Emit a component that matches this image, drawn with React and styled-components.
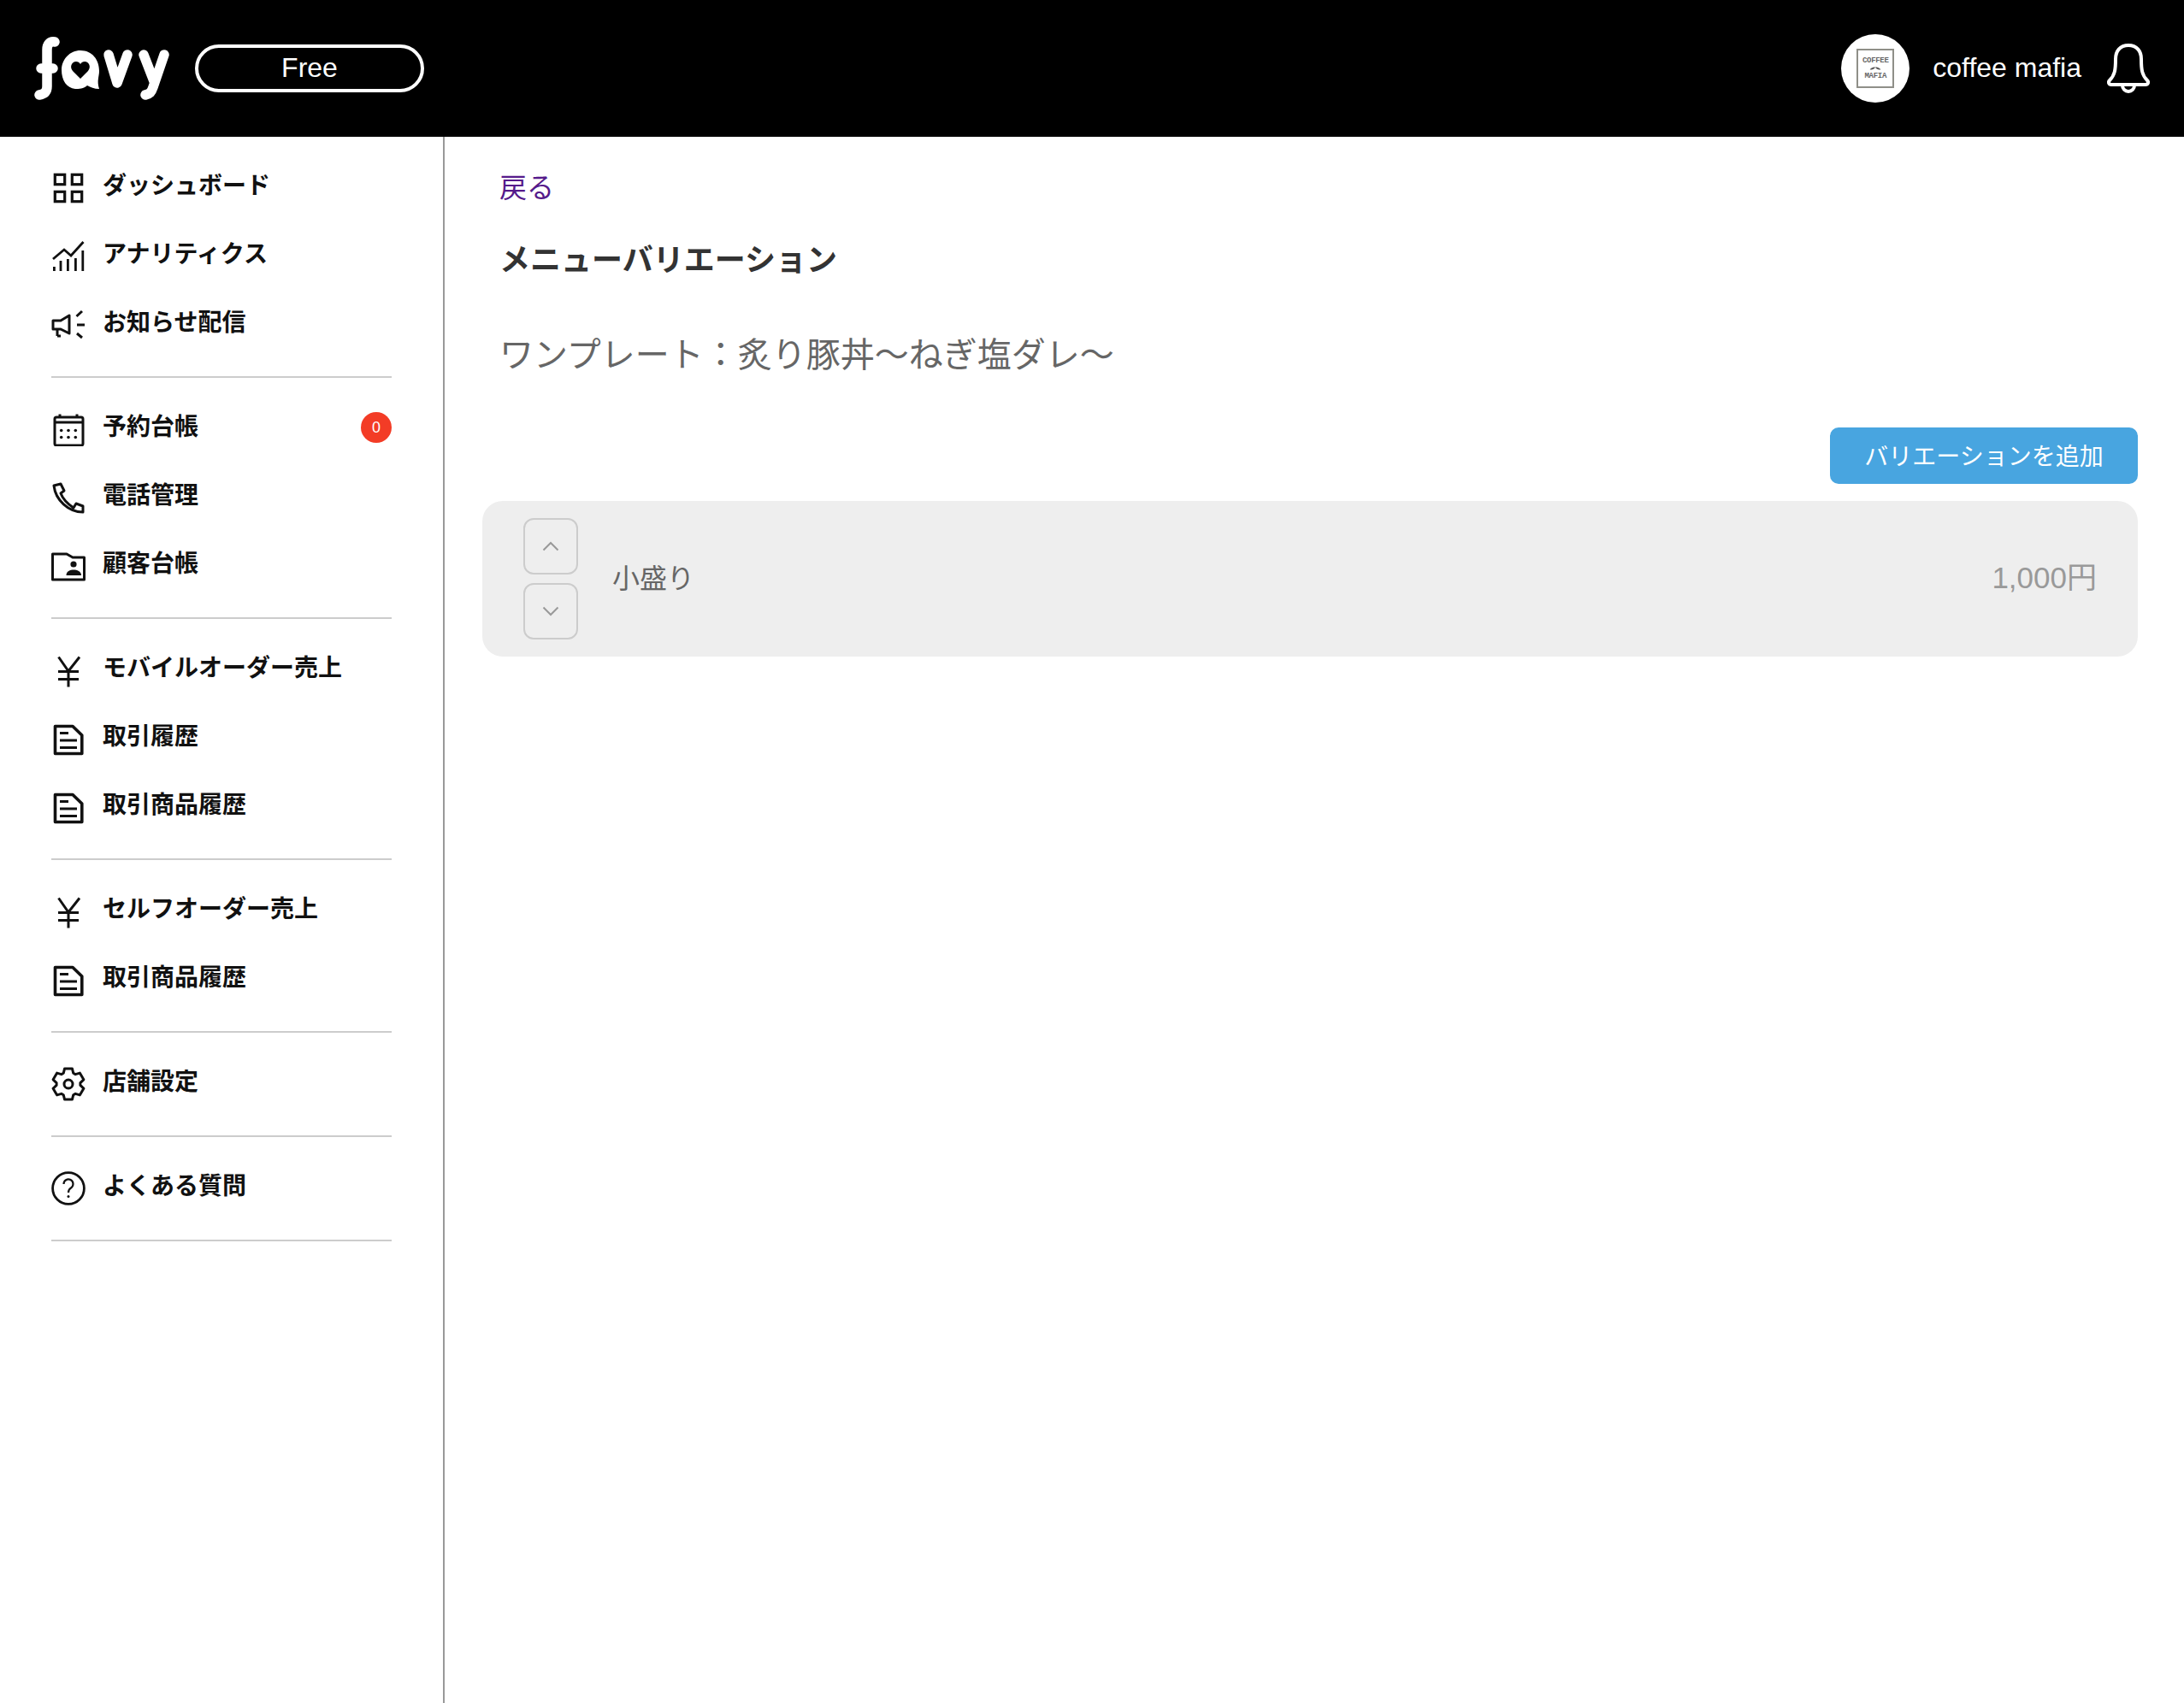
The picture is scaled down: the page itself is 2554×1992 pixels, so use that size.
import styled, { createGlobalStyle } from "styled-components";

const GlobalStyle = createGlobalStyle`
  html, body {
    margin: 0;
    padding: 0;
    background: #fff;
    font-family: "Liberation Sans", "Noto Sans CJK JP", sans-serif;
  }
  * { box-sizing: border-box; }
`;

const Page = styled.div`
  width: 2554px;
  height: 1992px;
  display: flex;
  flex-direction: column;
  overflow: hidden;
`;

const Header = styled.header`
  height: 160px;
  flex: none;
  background: #000;
  display: flex;
  align-items: center;
  justify-content: space-between;
  padding: 0 40px;
  color: #fff;
`;

const HeaderGroup = styled.div`
  display: flex;
  align-items: center;
`;

const PlanPill = styled.div`
  width: 268px;
  height: 56px;
  margin-left: 30px;
  padding-bottom: 2px;
  border: 4px solid #fff;
  border-radius: 28px;
  display: flex;
  align-items: center;
  justify-content: center;
  font-size: 32px;
`;

const Avatar = styled.div`
  width: 80px;
  height: 80px;
  border-radius: 50%;
  background: #fff;
  display: flex;
  align-items: center;
  justify-content: center;
`;

const AvatarMark = styled.div`
  width: 44px;
  height: 46px;
  border: 2px solid #8f8f88;
  display: flex;
  flex-direction: column;
  align-items: center;
  justify-content: center;
  gap: 2px;
  font-family: "Liberation Mono", monospace;
  font-weight: 700;
  font-size: 9px;
  letter-spacing: -0.3px;
  line-height: 10px;
  color: #666;
`;

const ShopName = styled.div`
  margin-left: 27px;
  padding-bottom: 2px;
  font-size: 32px;
`;

const BellWrap = styled.div`
  margin-left: 30px;
  display: flex;
`;

const Body = styled.div`
  flex: 1;
  display: flex;
  min-height: 0;
`;

const Sidebar = styled.nav`
  width: 520px;
  flex: none;
  border-right: 2px solid #999;
  padding: 20px 60px 0;
`;

const Group = styled.div`
  padding-bottom: 20px;
  margin-bottom: 20px;
  border-bottom: 2px solid #ccc;
`;

const Row = styled.div`
  height: 80px;
  display: flex;
  align-items: center;
  color: #111;
`;

const IconBox = styled.div`
  width: 40px;
  height: 40px;
  flex: none;
  display: flex;
`;

const RowLabel = styled.span`
  flex: 1;
  margin-left: 20px;
  padding-bottom: 4px;
  font-size: 28px;
  line-height: 40px;
  font-weight: 700;
`;

const Badge = styled.span`
  width: 36px;
  height: 36px;
  margin-bottom: 4px;
  border-radius: 50%;
  background: #f33c26;
  color: #fff;
  font-size: 18px;
  display: flex;
  align-items: center;
  justify-content: center;
`;

const Main = styled.main`
  flex: 1;
  min-width: 0;
  padding: 0 54px 0 44px;
`;

const Intro = styled.div`
  padding-left: 20px;
`;

const BackLink = styled.a`
  display: block;
  margin-top: 37px;
  font-size: 32px;
  line-height: 46px;
  color: #551a8b;
`;

const Title = styled.h1`
  margin: 36px 0 0;
  font-size: 36px;
  line-height: 52px;
  font-weight: 700;
  color: #333;
`;

const Subtitle = styled.h2`
  margin: 55px 0 0;
  font-size: 40px;
  line-height: 58px;
  font-weight: 400;
  color: #666;
`;

const Actions = styled.div`
  margin-top: 56px;
  display: flex;
  justify-content: flex-end;
`;

const AddButton = styled.button`
  width: 360px;
  height: 66px;
  border: 0;
  border-radius: 10px;
  background: #48a5e0;
  color: #fff;
  font-family: inherit;
  font-size: 28px;
  padding: 0 0 2px;
`;

const VariationCard = styled.div`
  margin-top: 20px;
  height: 182px;
  border-radius: 24px;
  background: #eee;
  padding: 0 48px;
  display: flex;
  align-items: center;
`;

const Sorters = styled.div`
  display: flex;
  flex-direction: column;
  gap: 10px;
`;

const SortButton = styled.div`
  width: 64px;
  height: 66px;
  border: 2px solid #ccc;
  border-radius: 12px;
  display: flex;
  align-items: center;
  justify-content: center;
`;

const VariationName = styled.div`
  flex: 1;
  margin-left: 40px;
  padding-bottom: 6px;
  font-size: 32px;
  color: #666;
`;

const VariationPrice = styled.div`
  padding-bottom: 10px;
  font-size: 35px;
  color: #999;
`;

const Svg = ({ children, w = 40, h = 40, ...rest }) => (
  <svg
    width={w}
    height={h}
    viewBox={`0 0 ${w} ${h}`}
    fill="none"
    stroke="currentColor"
    strokeWidth="3"
    {...rest}
  >
    {children}
  </svg>
);

const FavyLogo = () => (
  <svg width="158" height="74" viewBox="40 49 158 74" fill="none" stroke="#fff" strokeWidth="11.5" strokeLinecap="round" strokeLinejoin="round">
    <path d="M64 55 C58 54 55 58 55 64 V107 C55 113 52 116 46 117" />
    <path d="M48 86 H62" />
    <path
      fill="#fff"
      stroke="none"
      fillRule="evenodd"
      d="M94 65 C108 65 116 76 116 89 C116 96 113 100 116 110 C110 110 106 108 102 106 C98 110 92 110 88 110 C78 109 72 100 72 88 C72 75 82 65 94 65 Z M94 98 L85 89 C81 84 84 78 89 78 C91 78 93 79 94 81 C95 79 97 78 99 78 C104 78 107 84 103 89 Z"
    />
    <path d="M127 70 L137 103 L149 70" />
    <path d="M168 70 L180 101 M192 70 L179 108 C177 114 175 116 170 117" />
  </svg>
);

const Moustache = () => (
  <svg width="16" height="4" viewBox="0 0 16 5">
    <path d="M0 4 C3 5 6 4 8 1 C10 4 13 5 16 4 C13 1 10 0 8 1 C6 0 3 1 0 4 Z" fill="#555" />
  </svg>
);

const BellIcon = () => (
  <Svg w={50} h={60} strokeWidth="4" strokeLinejoin="round">
    <path d="M25 3 C15 3 10 10 10 19 C10 32 9 38 3 44 C1 46 2 49 5 49 H45 C48 49 49 46 47 44 C41 38 40 32 40 19 C40 10 35 3 25 3 Z" />
    <path d="M18 50 A7 7 0 0 0 32 50" />
  </Svg>
);

const GridIcon = () => (
  <Svg strokeWidth="3.2">
    <rect x="4.3" y="4.3" width="11.4" height="11.4" />
    <rect x="24.3" y="4.3" width="11.4" height="11.4" />
    <rect x="4.3" y="24.3" width="11.4" height="11.4" />
    <rect x="24.3" y="24.3" width="11.4" height="11.4" />
  </Svg>
);

const ChartIcon = () => (
  <Svg strokeWidth="2.8">
    <path d="M2 23 L15 12 L23 19 L37.5 3" />
    <path d="M3.4 32 V37 M11 25 V37 M19.4 23 V37 M28.4 22 V37 M36.8 13 V37" />
  </Svg>
);

const MegaphoneIcon = () => (
  <Svg>
    <path d="M2 15 H11 L21 9 V30 L11 25 H2 Z" strokeLinejoin="round" />
    <path d="M7 25 V33 M11 33 L7 33" />
    <path d="M29.5 10 L36 4 M30 20 H39 M30 30 L36 35" />
  </Svg>
);

const CalendarIcon = () => (
  <Svg>
    <rect x="4" y="6" width="33" height="33" rx="2" />
    <path d="M4 12 H37 M10 2.5 V7 M30 2.5 V7" />
    <g fill="currentColor" stroke="none">
      {[11.7, 20, 28.3].flatMap((x) =>
        [21.5, 29.5].map((y) => <circle key={`${x}-${y}`} cx={x} cy={y} r="1.8" />)
      )}
    </g>
  </Svg>
);

const PhoneIcon = () => (
  <Svg strokeLinejoin="round">
    <path d="M3 6 L11 4 L15 12 L11 15 C14 23 20 28 26 32 L29 27 L37 30 L37 37 C20 37 5 23 3 6 Z" />
  </Svg>
);

const FolderIcon = () => (
  <Svg strokeLinejoin="round">
    <path d="M1.5 6 H18 L25 10 H38.5 V36 H1.5 Z" />
    <circle cx="26" cy="18" r="3.6" fill="currentColor" stroke="none" />
    <path d="M17.5 31 C17.5 26 22 24.5 26 24.5 C30 24.5 35 26 35 31 Z" fill="currentColor" stroke="none" />
  </Svg>
);

const YenIcon = () => (
  <Svg>
    <path d="M8.5 4.5 L20 21 L33 4.5 M20 21 V39.5 M8 21.5 H32 M8 30.5 H32" />
  </Svg>
);

const DocIcon = () => (
  <Svg strokeLinejoin="round">
    <path d="M4.5 5.5 H25 L35.8 16 V37.5 H4.5 Z" strokeWidth="3.6" />
    <path d="M10 13.5 H20 M10 22 H30 M10 30.5 H30" />
  </Svg>
);

// six-toothed gear outline
const gearPoints = Array.from({ length: 6 }).flatMap((_, k) => {
  const a = (k * Math.PI) / 3 - Math.PI / 2;
  const at = (da, r) =>
    `${(20 + r * Math.cos(a + da)).toFixed(2)},${(20 + r * Math.sin(a + da)).toFixed(2)}`;
  return [at(-0.42, 14), at(-0.24, 18.6), at(0.24, 18.6), at(0.42, 14)];
});

const GearIcon = () => (
  <Svg strokeLinejoin="round">
    <polygon points={gearPoints.join(" ")} />
    <circle cx="20" cy="20" r="5" />
  </Svg>
);

const HelpIcon = () => (
  <Svg strokeWidth="2.8">
    <circle cx="20" cy="20" r="18.4" />
    <path d="M14.5 15 A5.5 5.5 0 1 1 23 19.5 C20.8 20.8 20 22 20 25" strokeWidth="2.2" />
    <circle cx="20" cy="29.5" r="1.5" fill="currentColor" stroke="none" />
  </Svg>
);

const navGroups = [
  [
    { icon: GridIcon, label: "ダッシュボード" },
    { icon: ChartIcon, label: "アナリティクス" },
    { icon: MegaphoneIcon, label: "お知らせ配信" },
  ],
  [
    { icon: CalendarIcon, label: "予約台帳", badge: 0 },
    { icon: PhoneIcon, label: "電話管理" },
    { icon: FolderIcon, label: "顧客台帳" },
  ],
  [
    { icon: YenIcon, label: "モバイルオーダー売上" },
    { icon: DocIcon, label: "取引履歴" },
    { icon: DocIcon, label: "取引商品履歴" },
  ],
  [
    { icon: YenIcon, label: "セルフオーダー売上" },
    { icon: DocIcon, label: "取引商品履歴" },
  ],
  [{ icon: GearIcon, label: "店舗設定" }],
  [{ icon: HelpIcon, label: "よくある質問" }],
];

const Chevron = ({ up }) => (
  <svg width="20" height="12" viewBox="0 0 20 12" fill="none" stroke="#999" strokeWidth="2">
    <path d={up ? "M1.5 10.5 L10 2 L18.5 10.5" : "M1.5 1.5 L10 10 L18.5 1.5"} />
  </svg>
);

const App = () => {
  return (
    <Page>
      <GlobalStyle />
      <Header>
        <HeaderGroup>
          <FavyLogo />
          <PlanPill>Free</PlanPill>
        </HeaderGroup>
        <HeaderGroup>
          <Avatar>
            <AvatarMark>
              <span>COFFEE</span>
              <Moustache />
              <span>MAFIA</span>
            </AvatarMark>
          </Avatar>
          <ShopName>coffee mafia</ShopName>
          <BellWrap>
            <BellIcon />
          </BellWrap>
        </HeaderGroup>
      </Header>
      <Body>
        <Sidebar>
          {navGroups.map((items, i) => (
            <Group key={i}>
              {items.map(({ icon: Icon, label, badge }) => (
                <Row key={label}>
                  <IconBox>
                    <Icon />
                  </IconBox>
                  <RowLabel>{label}</RowLabel>
                  {badge !== undefined && <Badge>{badge}</Badge>}
                </Row>
              ))}
            </Group>
          ))}
        </Sidebar>
        <Main>
          <Intro>
            <BackLink>戻る</BackLink>
            <Title>メニューバリエーション</Title>
            <Subtitle>ワンプレート：炙り豚丼〜ねぎ塩ダレ〜</Subtitle>
          </Intro>
          <Actions>
            <AddButton>バリエーションを追加</AddButton>
          </Actions>
          <VariationCard>
            <Sorters>
              <SortButton>
                <Chevron up />
              </SortButton>
              <SortButton>
                <Chevron />
              </SortButton>
            </Sorters>
            <VariationName>小盛り</VariationName>
            <VariationPrice>1,000円</VariationPrice>
          </VariationCard>
        </Main>
      </Body>
    </Page>
  );
};

export default App;
